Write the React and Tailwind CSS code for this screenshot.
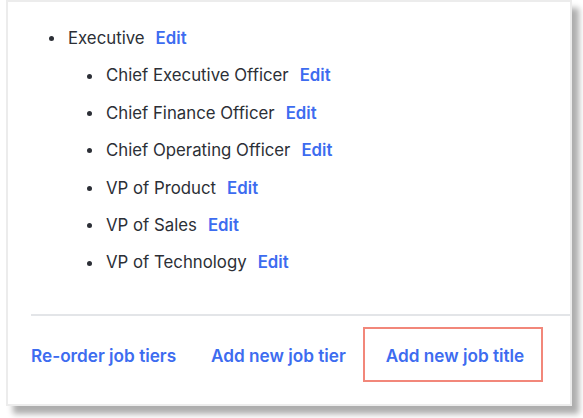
const titles = [
  'Chief Executive Officer',
  'Chief Finance Officer',
  'Chief Operating Officer',
  'VP of Product',
  'VP of Sales',
  'VP of Technology',
];

function Item({ label, indent }) {
  return (
    <li className={`flex items-center h-[37.4px] ${indent ? 'pl-[79px]' : 'pl-[41px]'}`}>
      <span className="w-[5px] h-[5px] rounded-full bg-[#2c2f36] mr-[14px]" />
      <span className="text-[#2c2f36]">{label}</span>
      <a href="#" className="ml-[11px] text-[#3d6cf0] font-semibold">Edit</a>
    </li>
  );
}

export default function App() {
  return (
    <div className="bg-white w-[583px] h-[418px] pl-[6px] font-['Inter',sans-serif] text-[16.8px]">
      <div className="w-[566px] h-[406px] bg-white border-2 border-[#ececec] shadow-[7px_8px_6px_rgba(0,0,0,0.32)] flex flex-col">
        <ul className="pt-[18px]">
          <Item label="Executive" />
          {titles.map((t) => (
            <Item key={t} label={t} indent />
          ))}
        </ul>
        <div className="mt-auto ml-[23px] mb-[22px] border-t-2 border-[#e3e5e8]">
          <div className="flex items-center mt-[11px] text-[#3d6cf0] font-semibold text-[17.2px]">
            <a href="#" className="w-[180px] pt-[3px]">Re-order job tiers</a>
            <a href="#" className="w-[152px] pt-[3px]">Add new job tier</a>
            <a href="#" className="w-[180px] h-[55px] pt-[3px] pl-[4px] border-2 border-[#f2877a] flex items-center justify-center">
              Add new job title
            </a>
          </div>
        </div>
      </div>
    </div>
  );
}
